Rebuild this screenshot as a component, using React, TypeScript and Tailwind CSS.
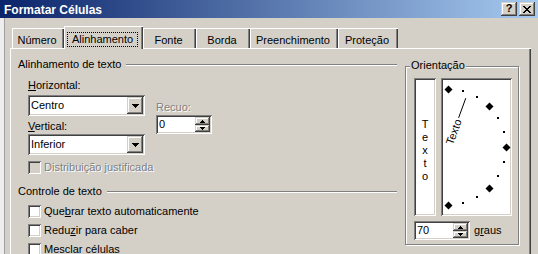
import React from "react";

const sunken =
  "shadow-[inset_1px_1px_0_#808080,inset_-1px_-1px_0_#ffffff,inset_2px_2px_0_#404040,inset_-2px_-2px_0_#d4d0c8]";
const raised =
  "shadow-[inset_-1px_-1px_0_#404040,inset_1px_1px_0_#d4d0c8,inset_-2px_-2px_0_#808080,inset_2px_2px_0_#ffffff]";

function DownArrow() {
  return (
    <svg width="7" height="4" viewBox="0 0 7 4" shapeRendering="crispEdges">
      <rect x="0" y="0" width="7" height="1" fill="#000" />
      <rect x="1" y="1" width="5" height="1" fill="#000" />
      <rect x="2" y="2" width="3" height="1" fill="#000" />
      <rect x="3" y="3" width="1" height="1" fill="#000" />
    </svg>
  );
}

function SmallArrow({ up }: { up?: boolean }) {
  return (
    <svg width="5" height="3" viewBox="0 0 5 3" shapeRendering="crispEdges">
      {up ? (
        <>
          <rect x="2" y="0" width="1" height="1" fill="#000" />
          <rect x="1" y="1" width="3" height="1" fill="#000" />
          <rect x="0" y="2" width="5" height="1" fill="#000" />
        </>
      ) : (
        <>
          <rect x="0" y="0" width="5" height="1" fill="#000" />
          <rect x="1" y="1" width="3" height="1" fill="#000" />
          <rect x="2" y="2" width="1" height="1" fill="#000" />
        </>
      )}
    </svg>
  );
}

function Combo({ value, className = "" }: { value: string; className?: string }) {
  return (
    <div className={`h-[21px] w-[117px] bg-white ${sunken} p-[2px] flex ${className}`}>
      <div className="flex-1 pl-[1px] flex items-center">{value}</div>
      <div className={`w-[16px] h-[17px] bg-[#d4d0c8] ${raised} flex items-center justify-center`}>
        <DownArrow />
      </div>
    </div>
  );
}

function Spin({ value, className = "" }: { value: string; className?: string }) {
  return (
    <div className={`h-[19px] bg-white ${sunken} p-[2px] flex ${className}`}>
      <div className="flex-1 pl-[1px] flex items-center">{value}</div>
      <div className="w-[15px] flex flex-col">
        <div className={`h-[8px] bg-[#d4d0c8] ${raised} flex items-center justify-center`}>
          <SmallArrow up />
        </div>
        <div className={`h-[7px] bg-[#d4d0c8] ${raised} flex items-center justify-center`}>
          <SmallArrow />
        </div>
      </div>
    </div>
  );
}

function Check({ label, disabled }: { label: React.ReactNode; disabled?: boolean }) {
  return (
    <div className="flex items-center gap-[3px] h-[13px]">
      <div className={`w-[13px] h-[13px] ${sunken} ${disabled ? "bg-[#d4d0c8]" : "bg-white"}`} />
      <span className={disabled ? "text-[#808080] [text-shadow:1px_1px_0_#ffffff]" : ""}>{label}</span>
    </div>
  );
}

function GroupHeader({ label, className = "" }: { label: string; className?: string }) {
  return (
    <div className={`flex items-center h-[13px] ${className}`}>
      <span>{label}</span>
      <div className="flex-1 ml-[5px] h-[2px] border-t border-t-[#808080] border-b border-b-white" />
    </div>
  );
}

const tabShadow =
  "shadow-[inset_1px_1px_0_#ffffff,inset_-1px_0_0_#404040,inset_-2px_0_0_#808080]";

function Tab({ label, w, active }: { label: string; w: string; active?: boolean }) {
  if (active) {
    return (
      <div
        className={`${w} h-[23px] -mb-[1px] relative z-10 bg-[#d4d0c8] pt-[6px] pr-[2px] flex justify-center ${tabShadow}`}
      >
        <span className="h-[15px] border border-dotted border-black px-[4px]">{label}</span>
      </div>
    );
  }
  return (
    <div className={`${w} h-[20px] bg-[#d4d0c8] pt-[6px] pr-[2px] text-center ${tabShadow}`}>{label}</div>
  );
}

function Dial() {
  const cx = 7;
  const cy = 69;
  const R = 58;
  const pt = (a: number, r: number) => {
    const rad = (a * Math.PI) / 180;
    return [cx + r * Math.cos(rad), cy - r * Math.sin(rad)];
  };
  const diamonds = [90, 45, 0, -45, -90];
  const dots = [75, 60, 30, 15, -15, -30, -60, -75];
  const [lx1, ly1] = pt(70, 31);
  const [lx2, ly2] = pt(70, 52);
  return (
    <svg className="absolute inset-0" width="71" height="138" viewBox="0 0 71 138">
      {diamonds.map((a) => {
        const [x, y] = pt(a, R);
        const X = Math.round(x) + 0.5;
        const Y = Math.round(y) + 0.5;
        return (
          <polygon
            key={a}
            points={`${X},${Y - 4} ${X + 4},${Y} ${X},${Y + 4} ${X - 4},${Y}`}
            fill="#000"
          />
        );
      })}
      {dots.map((a) => {
        const [x, y] = pt(a, R);
        return (
          <rect key={a} x={Math.round(x) - 1} y={Math.round(y) - 1} width="2" height="2" fill="#000" shapeRendering="crispEdges" />
        );
      })}
      <line x1={lx1} y1={ly1} x2={lx2} y2={ly2} stroke="#000" strokeWidth="1" />
      <text
        transform={`translate(${cx} ${cy}) rotate(-70)`}
        x="3"
        y="4"
        fontSize="11"
        fontFamily="Liberation Sans, Arial, sans-serif"
        fill="#000"
      >
        Texto
      </text>
    </svg>
  );
}

export default function App() {
  return (
    <div className="w-[538px] h-[254px] overflow-hidden bg-[#d4d0c8] font-['Liberation_Sans',Arial,sans-serif] text-[11px] leading-[13px] text-black flex flex-col">
      {/* Title bar */}
      <div className="h-[18px] shrink-0 flex items-center bg-[linear-gradient(to_right,#0a246a,#a6caf0)] pl-[4px] pr-[3px]">
        <span className="flex-1 mt-[1px] text-white font-bold text-[12px] leading-[14px]">Formatar Células</span>
        <div className="flex gap-[2px]">
          <div className={`w-[16px] h-[14px] bg-[#d4d0c8] ${raised} flex items-center justify-center`}>
            <span className="font-bold text-[11px] leading-[11px] pb-[1px]">?</span>
          </div>
          <div className={`w-[16px] h-[14px] bg-[#d4d0c8] ${raised} flex items-center justify-center`}>
            <svg width="8" height="7" viewBox="0 0 8 7" shapeRendering="crispEdges">
              {[0, 1, 2, 3, 4, 5, 6].map((i) => (
                <React.Fragment key={i}>
                  <rect x={i} y={i} width="2" height="1" fill="#000" />
                  <rect x={6 - i} y={i} width="2" height="1" fill="#000" />
                </React.Fragment>
              ))}
            </svg>
          </div>
        </div>
      </div>

      {/* Body */}
      <div className="flex-1 flex min-h-0">
        <div className="w-[5px] shrink-0 bg-[#eeeeee] border-r border-r-[#a0a0a0]" />
        <div className="flex flex-col pl-[5px] pt-[8px]">
          {/* Tabs */}
          <div className="flex items-end h-[22px] pl-[2px]">
            <Tab label="Número" w="w-[52px]" />
            <Tab label="Alinhamento" w="w-[79px]" active />
            <Tab label="Fonte" w="w-[53px]" />
            <Tab label="Borda" w="w-[54px]" />
            <Tab label="Preenchimento" w="w-[88px]" />
            <Tab label="Proteção" w="w-[60px]" />
          </div>

          {/* Panel */}
          <div
            className={`w-[521px] flex-1 pt-[10px] pl-[8px] flex gap-[8px] shadow-[inset_1px_1px_0_#ffffff,inset_-1px_0_0_#404040,inset_-2px_0_0_#808080]`}
          >
            {/* Left column */}
            <div className="w-[379px] flex flex-col">
              <GroupHeader label="Alinhamento de texto" />
              <div className="pl-[10px] mt-[8px] flex gap-[11px]">
                <div className="flex flex-col w-[117px]">
                  <span>
                    <u>H</u>orizontal:
                  </span>
                  <Combo value="Centro" className="mt-[3px]" />
                  <span className="mt-[4px]">
                    <u>V</u>ertical:
                  </span>
                  <Combo value="Inferior" className="mt-[1px]" />
                </div>
                <div className="flex flex-col pt-[22px]">
                  <span className="text-[#808080] [text-shadow:1px_1px_0_#ffffff]">Recuo:</span>
                  <Spin value="0" className="w-[56px] mt-[1px]" />
                </div>
              </div>
              <div className="pl-[10px] mt-[6px]">
                <Check disabled label="Distribuição justificada" />
              </div>
              <GroupHeader label="Controle de texto" className="mt-[11px]" />
              <div className="pl-[10px] mt-[7px] flex flex-col gap-[6px]">
                <Check
                  label={
                    <>
                      Que<u>b</u>rar texto automaticamente
                    </>
                  }
                />
                <Check
                  label={
                    <>
                      Redu<u>z</u>ir para caber
                    </>
                  }
                />
                <Check
                  label={
                    <>
                      <u>M</u>esclar células
                    </>
                  }
                />
              </div>
            </div>

            {/* Orientation group */}
            <div className="mt-[8px] w-[114px] h-[179px] relative border border-[#808080] shadow-[inset_1px_1px_0_#ffffff,1px_1px_0_#ffffff] pt-[11px] pl-[8px] flex flex-col">
              <span className="absolute -top-[8px] left-[4px] px-[1px] bg-[#d4d0c8]">Orientação</span>
              <div className="flex gap-[5px]">
                <div className={`w-[22px] h-[138px] bg-white ${sunken} flex flex-col items-center justify-center pt-[6px]`}>
                  {"Texto".split("").map((c, i) => (
                    <span key={i}>{c}</span>
                  ))}
                </div>
                <div className={`w-[71px] h-[138px] bg-white ${sunken} relative`}>
                  <Dial />
                </div>
              </div>
              <div className="flex items-center mt-[5px] gap-[4px]">
                <Spin value="70" className="w-[56px]" />
                <span>
                  g<u>r</u>aus
                </span>
              </div>
            </div>
          </div>
        </div>
      </div>
    </div>
  );
}
